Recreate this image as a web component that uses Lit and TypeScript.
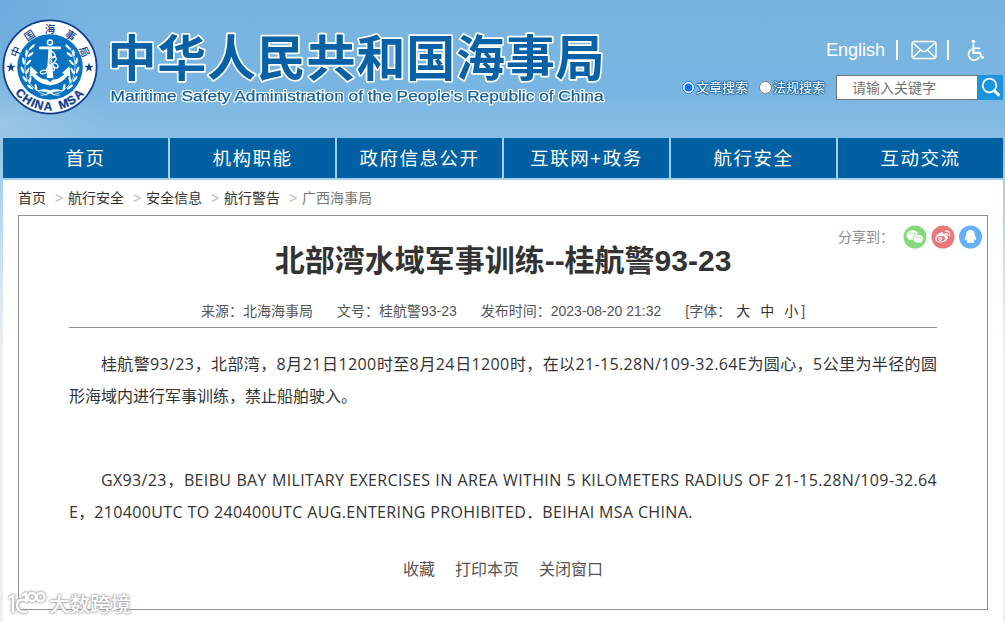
import {LitElement, html, css, svg} from 'lit';
import {customElement, property} from 'lit/decorators.js';

const NAV_ITEMS = ['首页', '机构职能', '政府信息公开', '互联网+政务', '航行安全', '互动交流'];
const CRUMBS = ['首页', '航行安全', '安全信息', '航行警告', '广西海事局'];

@customElement('msa-emblem')
export class MsaEmblem extends LitElement {
    static styles = css`
        :host {
            display: block;
            width: 96px;
            height: 96px;
        }

        svg {
            display: block;
        }

        .cn {
            font: 500 10.5px "Noto Sans CJK SC", sans-serif;
            fill: #173f86;
            text-anchor: middle;
        }

        .en {
            font: bold 12px "Liberation Sans", sans-serif;
            fill: #123f8c;
            stroke: #123f8c;
            stroke-width: .3px;
            text-anchor: middle;
        }
    `;

    // characters are spread over the ring, angle 0 is the top
    ringText(chars: string, angles: number[], bottom = false) {
        return [...chars].map((c, i) => {
            const y = bottom ? 91.5 : 14.3;
            return svg`<text class=${bottom ? 'en' : 'cn'} x="48" y=${y}
                transform="rotate(${angles[i]} 48 48)">${c}</text>`;
        });
    }

    leaf(x: number, y: number, angle: number) {
        return svg`<ellipse cx=${x} cy=${y} rx="1.2" ry="3.6" transform="rotate(${angle} ${x} ${y})"/>`;
    }

    wreath() {
        return svg`
            <path d="M29 28C21 39 20 58 32 69Q38 75 45 76" fill="none" stroke="#fff" stroke-width=".7"/>
            ${this.leaf(30, 28, 45)}${this.leaf(24.5, 34, 5)}${this.leaf(28.5, 35.5, 52)}
            ${this.leaf(21.5, 42, -8)}${this.leaf(26.5, 43.5, 42)}
            ${this.leaf(20.5, 51, -22)}${this.leaf(25.5, 52, 28)}
            ${this.leaf(23, 60, -38)}${this.leaf(28, 61, 12)}
            ${this.leaf(28, 68, -55)}${this.leaf(34, 68.5, -10)}
        `;
    }

    render() {
        return html`
        <svg width="96" height="96" viewBox="0 0 96 96">
            <circle cx="48" cy="48" r="46.6" fill="#fff" stroke="#123f8c" stroke-width="1.8"/>
            <circle cx="48" cy="48" r="32.8" fill="#0873c0"/>
            ${this.ringText('中国海事局', [-66, -33, 0, 33, 66])}
            ${this.ringText('CHINA MSA', [48, 35, 25, 16, 3, -8, -20, -33, -46], true)}
            <path fill="#123f8c" d="M9 43.500l1.100 3.300 3.500.1-2.800 2.100 1 3.400L9 50.400l-2.800 2 1-3.400-2.800-2.100 3.500-.1z"/>
            <path fill="#123f8c" d="M87 43.500l1.100 3.300 3.500.1-2.800 2.100 1 3.400-2.800-2-2.800 2 1-3.400-2.800-2.100 3.500-.1z"/>
            <g fill="#fff">
                ${this.wreath()}
                <g transform="translate(96 0) scale(-1 1)">${this.wreath()}</g>
            </g>
            <g fill="#fff">
                <circle cx="48" cy="23.500" r="2.500" fill="none" stroke="#fff" stroke-width="1.500"/>
                <rect x="37" y="27.500" width="22" height="2.800" rx=".8"/>
                <path d="M46.500 29h3l1.800 30h-6.600z"/>
                <path d="M28.500 47l-1 11 2.700-1.500Q36 65 48 66.500 60 65 65.800 56.500L68.500 58l-1-11-7.500 7 2.600 1Q57 60.500 51 60.500L48 63l-3-2.500Q39 60.500 33.400 55l2.600-1z"/>
                <path d="M34 72Q42 69 48 71.500 54 69 62 72 54 72 49.500 74q4 2 9 2-5 1.500-10.500-1.500Q42.500 77.500 37.500 76q5 0 9-2Q42 72 34 72z"/>
            </g>
            <g fill="none" stroke="#0873c0" stroke-width="2">
                <ellipse cx="51" cy="41" rx="3.800" ry="2.200" transform="rotate(-45 51 41)"/>
            </g>
            <g fill="none" stroke="#fff" stroke-width="1.200">
                <ellipse cx="50.500" cy="35.500" rx="3.500" ry="2" transform="rotate(55 50.500 35.500)"/>
                <ellipse cx="51" cy="41" rx="3.800" ry="2.200" transform="rotate(-45 51 41)"/>
                <ellipse cx="53.500" cy="46.500" rx="3" ry="2" transform="rotate(45 53.500 46.500)"/>
                <ellipse cx="48.500" cy="50" rx="4" ry="2"/>
                <ellipse cx="41.500" cy="53" rx="3.200" ry="1.700" transform="rotate(-10 41.500 53)"/>
            </g>
        </svg>
        `;
    }
}

@customElement('site-header')
export class SiteHeader extends LitElement {
    static styles = css`
        :host {
            display: flex;
            justify-content: space-between;
            height: 138px;
            box-sizing: border-box;
            padding: 19px 2px 0 2px;
            font-family: "Liberation Sans", "Noto Sans CJK SC", sans-serif;
        }

        .brand {
            display: flex;
            gap: 8px;
        }

        .name {
            display: block;
        }

        .name-cn {
            font: bold 49px "Liberation Sans", "Noto Sans CJK SC", sans-serif;
            fill: #0761a4;
            stroke: #fff;
            stroke-width: 3.4px;
            stroke-linejoin: round;
            paint-order: stroke;
        }

        .name-en {
            font: 15.5px "Liberation Sans", sans-serif;
            fill: #14609c;
            stroke: #14609c;
            stroke-width: .25px;
            filter: drop-shadow(1px 0 0 #fff) drop-shadow(-1px 0 0 #fff)
                drop-shadow(0 1px 0 #fff) drop-shadow(0 -1px 0 #fff);
        }

        .tools {
            display: flex;
            flex-direction: column;
            align-items: flex-end;
            padding-top: 18px;
        }

        .links {
            display: flex;
            align-items: center;
            height: 26px;
            padding-right: 18px;
            color: #fff;
            font-size: 18px;
        }

        .bar {
            width: 2px;
            height: 20px;
            background: #fff;
            margin: 0 13px 0 11px;
        }

        .bar.second {
            margin: 0 17px 0 10px;
        }

        .search {
            display: flex;
            align-items: center;
            margin-top: 12px;
        }

        label {
            display: flex;
            align-items: center;
            margin-right: 11px;
            font-size: 13px;
            line-height: 20px;
            color: #fff;
            text-shadow: 1px 0 1px #155f98, -1px 0 1px #155f98, 0 1px 1px #155f98, 0 -1px 1px #155f98;
        }

        input[type=radio] {
            width: 13px;
            height: 13px;
            margin: 0 1px 0 0;
        }

        input[type=text] {
            box-sizing: border-box;
            width: 142px;
            height: 25px;
            margin: 0;
            padding: 0 0 0 15px;
            border: 1px solid #767676;
            background: #fff;
            font: 14px "Liberation Sans", "Noto Sans CJK SC", sans-serif;
        }

        input::placeholder {
            color: #757575;
        }

        button {
            width: 25px;
            height: 25px;
            padding: 0;
            border: none;
            background: #1c94de;
        }

        button svg {
            display: block;
        }
    `;

    render() {
        return html`
        <div class="brand">
            <msa-emblem></msa-emblem>
            <svg class="name" width="502" height="100" viewBox="0 0 502 100">
                <text class="name-cn" x="1.500" y="56.500" textLength="497">中华人民共和国海事局</text>
                <text class="name-en" x="4.500" y="82" textLength="493" lengthAdjust="spacingAndGlyphs">Maritime Safety Administration of the People's Republic of China</text>
            </svg>
        </div>
        <div class="tools">
            <div class="links">
                <span>English</span>
                <span class="bar"></span>
                <svg width="26" height="20" viewBox="0 0 26 20" fill="none" stroke="#fff" stroke-width="1.4">
                    <rect x="1" y="1.500" width="24" height="17" rx="2.500"/>
                    <path d="M2.500 3.500l8.300 7.300q2.200 1.700 4.400 0l8.300-7.300M2.500 17l7-7M23.500 17l-7-7"/>
                </svg>
                <span class="bar second"></span>
                <svg width="19" height="24" viewBox="0 0 20 24" fill="none" stroke="#fff" stroke-width="2">
                    <circle cx="7.800" cy="3.200" r="1.900" fill="#fff" stroke="none"/>
                    <path d="M7.800 6v9h6.700l2.500 5.300 1.800-.8" stroke-width="2.200"/>
                    <path d="M8 10.200h7" stroke-width="1.600"/>
                    <path d="M6 11.200a6 6 0 1 0 8 8" stroke-width="1.700"/>
                </svg>
            </div>
            <div class="search">
                <label><input type="radio" name="kind" checked>文章搜索</label>
                <label><input type="radio" name="kind">法规搜索</label>
                <input type="text" placeholder="请输入关键字">
                <button>
                    <svg width="25" height="25" viewBox="0 0 25 25" fill="none" stroke="#fff">
                        <circle cx="11.500" cy="10.500" r="6.800" stroke-width="1.700"/>
                        <path d="M16.300 15.500l4.200 4.300" stroke-width="3" stroke-linecap="round"/>
                    </svg>
                </button>
            </div>
        </div>
        `;
    }
}

@customElement('share-bar')
export class ShareBar extends LitElement {
    static styles = css`
        :host {
            display: flex;
            align-items: center;
            color: #8d8d8d;
            font-size: 14px;
            line-height: 24px;
        }

        span {
            width: 65px;
        }

        svg {
            display: block;
            margin-right: 4px;
        }
    `;

    render() {
        return html`
        <span>分享到：</span>
        <svg width="24" height="24" viewBox="0 0 24 24">
            <circle cx="12" cy="12" r="11.500" fill="#86d97b"/>
            <path fill="#fff" d="M9.500 5.300c-3.300 0-5.900 2.200-5.900 4.900 0 1.500.8 2.800 2.100 3.700l-.5 1.700 2-1q1.100.4 2.400.4c3.200 0 5.900-2.100 5.900-4.800s-2.700-4.900-6-4.900z"/>
            <path fill="#fff" stroke="#86d97b" stroke-width=".8" d="M15.200 9.400c-2.900 0-5.200 1.900-5.200 4.300s2.300 4.300 5.200 4.300q1 0 1.900-.3l1.800 1-.4-1.600c1.100-.8 1.900-2 1.900-3.400 0-2.400-2.300-4.300-5.200-4.300z"/>
            <g fill="#86d97b"><circle cx="7.500" cy="8.500" r=".8"/><circle cx="11.500" cy="8.500" r=".8"/><circle cx="13.600" cy="12.500" r=".7"/><circle cx="17" cy="12.500" r=".7"/></g>
        </svg>
        <svg width="24" height="24" viewBox="0 0 24 24">
            <circle cx="12" cy="12" r="11.500" fill="#e9767b"/>
            <path fill="#fff" d="M10.500 7.200c1.300-.3 2 .5 1.600 1.900 2.200-.8 3.700-.2 3.100 1.500 1.800.5 2.100 2.200.9 3.900-1.200 1.800-3.800 3-6.600 3-3.200 0-5.300-1.500-5.300-3.600 0-2.700 3.500-6.200 6.300-6.700z"/>
            <ellipse cx="9.800" cy="13.600" rx="4.200" ry="2.900" fill="#e9767b" transform="rotate(-8 9.800 13.600)"/>
            <circle cx="9.300" cy="13.800" r="2" fill="#fff"/>
            <circle cx="9" cy="14.100" r=".8" fill="#e9767b"/>
            <path d="M14.500 6.200q4.600-.6 4.200 4.300M14.500 8.500q2-.1 2 2" fill="none" stroke="#fff" stroke-width="1.200" stroke-linecap="round"/>
        </svg>
        <svg width="24" height="24" viewBox="0 0 24 24">
            <circle cx="11.500" cy="12" r="11.500" fill="#64b1f7"/>
            <path fill="#fff" d="M11.500 5c-2.700 0-4.300 1.900-4.300 4.700-.2.500-.3 1-.2 1.400-1 1.400-1.700 3.200-1 3.900.4.300.9-.3 1.200-.7.200.8.600 1.400 1.100 1.900-.9.400-1 1.900 1.200 1.900q1.200 0 2-.7.800.7 2 .7c2.200 0 2.100-1.500 1.200-1.900.5-.5.900-1.100 1.100-1.900.3.400.8 1 1.200.7.700-.7 0-2.500-1-3.900q.1-.7-.2-1.400c0-2.800-1.600-4.700-4.300-4.700z"/>
        </svg>
        `;
    }
}

@customElement('notice-line')
export class NoticeLine extends LitElement {
    @property()
    text = '';

    static styles = css`
        :host {
            display: block;
            height: 32px;
            line-height: 32px;
            white-space: nowrap;
        }

        .latin {
            font-family: "Open Sans", sans-serif;
            letter-spacing: .36px;
            line-height: 1;
        }
    `;

    // latin runs have their own face and a looser spacing
    render() {
        const runs = this.text.split(/([\x20-\x7e]+)/).filter(r => r !== '');
        return runs.map(r => /^[\x20-\x7e]/.test(r) ? html`<span class="latin">${r}</span>` : r);
    }
}

@customElement('app-root')
export class AppRoot extends LitElement {
    static styles = css`
        :host {
            display: block;
            position: relative;
            width: 1005px;
            height: 622px;
            overflow: hidden;
            font-family: "Liberation Sans", "Noto Sans CJK SC", sans-serif;
            background:
                radial-gradient(ellipse 110px 50px at 0 125px, rgba(180, 208, 228, .5), rgba(180, 208, 228, 0)),
                radial-gradient(ellipse 90px 110px at 0 0, rgba(95, 160, 220, .5), rgba(95, 160, 220, 0)),
                linear-gradient(#79b4e0 0, #79b5e2 90px, #89bee6 140px, #a5cfee 180px, #cfe3f2 270px, #eee 350px);
        }

        .page {
            margin: 0 2px 0 3px;
        }

        nav {
            display: grid;
            grid-template-columns: repeat(6, 165px);
            gap: 2px;
            height: 40px;
            padding-bottom: 2px;
            background: #a2cff0;
        }

        nav a {
            background: #0060a1;
            color: #fff;
            font-size: 18.5px;
            line-height: 42px;
            letter-spacing: 1.5px;
            text-align: center;
            height: 40px;
        }

        .content {
            height: 442px;
            box-sizing: border-box;
            padding: 0 15px;
            background: #fff;
        }

        .crumbs {
            display: flex;
            height: 35px;
            line-height: 36px;
            font-size: 14px;
            color: #333;
        }

        .crumbs i {
            width: 13px;
            padding-left: 9px;
            color: #bbb;
            font-style: normal;
        }

        .crumbs span:last-child {
            color: #777;
        }

        article {
            position: relative;
            box-sizing: border-box;
            width: 970px;
            height: 395px;
            padding: 26px 50px 0;
            border: 1px solid #919191;
            color: #333;
        }

        share-bar {
            position: absolute;
            top: 9px;
            right: 0;
        }

        h1 {
            margin: 0;
            font-size: 30px;
            line-height: 38px;
            text-align: center;
        }

        .meta {
            display: flex;
            justify-content: center;
            gap: 24px;
            height: 32px;
            margin-top: 15px;
            border-bottom: 1px solid #919191;
            line-height: 32px;
            font-size: 14px;
            color: #555;
        }

        .meta b {
            margin-right: 10px;
            font-weight: normal;
            color: #333;
        }

        .meta b:first-child {
            margin-left: 5px;
        }

        .meta b:last-child {
            margin-right: 3px;
        }

        .text {
            padding-top: 21px;
            font-size: 16px;
        }

        .first {
            padding-left: 32px;
        }

        .full {
            text-align: justify;
            text-align-last: justify;
        }

        .english {
            margin-top: 52px;
        }

        .actions {
            display: flex;
            justify-content: center;
            gap: 20px;
            margin-top: 25px;
            font-size: 16px;
            line-height: 32px;
            color: #555;
        }

        .watermark {
            position: absolute;
            left: 8px;
            top: 587px;
            display: flex;
            align-items: center;
            gap: 3px;
            color: #fff;
            font: 500 20.500px/32px "Noto Sans CJK SC", sans-serif;
            text-shadow: 0 0 2px #999, 0 0 2px #aaa, 0 0 3px #bbb;
        }

        .watermark svg {
            filter: drop-shadow(0 0 1px #999) drop-shadow(0 0 1px #bbb);
        }
    `;

    render() {
        return html`
        <site-header></site-header>
        <div class="page">
            <nav>${NAV_ITEMS.map(n => html`<a>${n}</a>`)}</nav>
            <div class="content">
                <div class="crumbs">
                    ${CRUMBS.map((c, i) => html`${i ? html`<i>&gt;</i>` : ''}<span>${c}</span>`)}
                </div>
                <article>
                    <share-bar></share-bar>
                    <h1>北部湾水域军事训练--桂航警93-23</h1>
                    <div class="meta">
                        <span>来源：北海海事局</span>
                        <span>文号：桂航警93-23</span>
                        <span>发布时间：2023-08-20 21:32</span>
                        <span>[字体：<b>大</b><b>中</b><b>小</b>]</span>
                    </div>
                    <div class="text">
                        <notice-line class="first full" text="桂航警93/23，北部湾，8月21日1200时至8月24日1200时，在以21-15.28N/109-32.64E为圆心，5公里为半径的圆"></notice-line>
                        <notice-line text="形海域内进行军事训练，禁止船舶驶入。"></notice-line>
                        <notice-line class="first full english" text="GX93/23，BEIBU BAY MILITARY EXERCISES IN AREA WITHIN 5 KILOMETERS RADIUS OF 21-15.28N/109-32.64"></notice-line>
                        <notice-line text="E，210400UTC TO 240400UTC AUG.ENTERING PROHIBITED．BEIHAI MSA CHINA."></notice-line>
                    </div>
                    <div class="actions"><a>收藏</a><a>打印本页</a><a>关闭窗口</a></div>
                </article>
            </div>
        </div>
        <div class="watermark">
            <svg width="38" height="28" viewBox="0 0 38 28" fill="none" stroke="#fff" stroke-width="2.400">
                <path d="M2 8.500l3-1.500v16M19 11.500q-9-3-10 4 0 8 9 7.500M15 6l3-1.500v8" stroke-linecap="round"/>
                <circle cx="24" cy="8" r="4"/>
                <circle cx="32.500" cy="8" r="4"/>
            </svg>
            <span>大数跨境</span>
        </div>
        `;
    }
}
